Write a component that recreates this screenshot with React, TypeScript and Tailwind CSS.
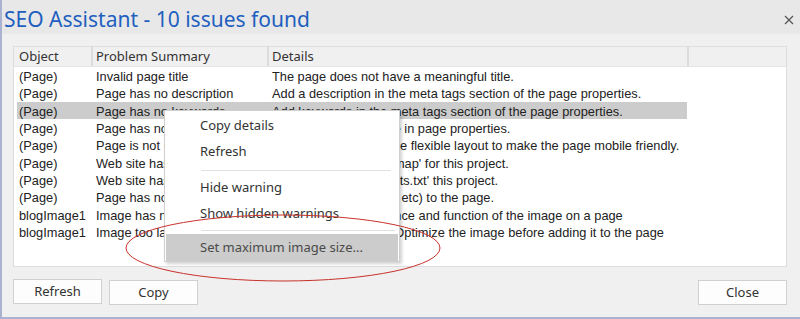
import React from 'react';

type Issue = { object: string; summary: string; details: string };

const issues: Issue[] = [
    { object: '(Page)', summary: 'Invalid page title', details: 'The page does not have a meaningful title.' },
    { object: '(Page)', summary: 'Page has no description', details: 'Add a description in the meta tags section of the page properties.' },
    { object: '(Page)', summary: 'Page has no keywords', details: 'Add keywords in the meta tags section of the page properties.' },
    { object: '(Page)', summary: 'Page has no language', details: 'Set the page language in page properties.' },
    { object: '(Page)', summary: 'Page is not responsive', details: 'Use a responsive or the flexible layout to make the page mobile friendly.' },
    { object: '(Page)', summary: 'Web site has no sitemap', details: "Create a new file 'sitemap' for this project." },
    { object: '(Page)', summary: 'Web site has no robots.txt', details: "Create a new file 'robots.txt' this project." },
    { object: '(Page)', summary: 'Page has no headings', details: 'Add headings (H1, H2 etc) to the page.' },
    { object: 'blogImage1', summary: 'Image has no alt text', details: 'Describe the appearance and function of the image on a page' },
    { object: 'blogImage1', summary: 'Image too large', details: 'The image is too big. Optimize the image before adding it to the page' },
];

const ui = { fontFamily: '"Noto Sans", "Open Sans", sans-serif' };
const list = { fontFamily: '"Liberation Sans", Arial, sans-serif' };

function Button({ label }: { label: string }) {
    return (
        <button
            className="w-[89px] h-[25px] bg-[#fdfdfd] border border-[#d0d0d0] text-[13px] text-[#333]"
            style={ui}
        >
            {label}
        </button>
    );
}

function MenuItem({ label, active }: { label: string; active?: boolean }) {
    return (
        <div
            className={
                active
                    ? 'h-[27px] flex items-center pl-[34px] bg-[#cccccc] text-[#4a4a4a] text-[13px]'
                    : 'h-[26px] flex items-center pl-[34px] text-[#333] text-[13px]'
            }
        >
            {label}
        </div>
    );
}

export default function App() {
    return (
        <div className="relative w-[800px] h-[319px] overflow-hidden bg-[#f0f0f0] border-l-2 border-b-2 border-[#a9b3d1] flex flex-col">
            {/* Title bar */}
            <div className="h-[34px] shrink-0 bg-[#e8e8e8] flex items-center justify-between pl-[2px] pr-[6px] pt-[5px]">
                <h1 className="text-[21px] text-[#1f5fbf] leading-none" style={ui}>
                    SEO Assistant - 10 issues found
                </h1>
                <svg width="10" height="10" viewBox="0 0 10 10" className="mt-[1px]">
                    <path d="M1 1 L9 9 M9 1 L1 9" stroke="#555" strokeWidth="1.2" />
                </svg>
            </div>

            {/* Body */}
            <div className="flex-1 flex flex-col pl-[11px]">
                <div className="mt-[12px] w-[774px] h-[221px] bg-white border border-[#dddddd] flex flex-col">
                    {/* Header */}
                    <div
                        className="h-[20px] shrink-0 bg-[#f0f0f0] border-b border-[#e4e4e4] flex text-[13px] text-[#333]"
                        style={ui}
                    >
                        <div className="w-[77px] pl-[5px] flex items-center">Object</div>
                        <div className="w-[176px] border-l-2 border-[#dcdcdc] pl-[3px] flex items-center">Problem Summary</div>
                        <div className="w-[420px] border-l-2 border-[#dcdcdc] pl-[3px] flex items-center">Details</div>
                        <div className="flex-1 border-l-2 border-[#dcdcdc]" />
                    </div>

                    {/* Rows */}
                    <div className="pl-[3px] text-[12.8px] text-[#222]" style={list}>
                        {issues.map((issue, i) => (
                            <div
                                key={i}
                                className={
                                    i === 2
                                        ? 'w-[670px] h-[17.33px] grid grid-cols-[77px_176px_1fr] items-center bg-[#cccccc] whitespace-nowrap'
                                        : 'w-[670px] h-[17.33px] grid grid-cols-[77px_176px_1fr] items-center whitespace-nowrap'
                                }
                            >
                                <div className="pl-[2px]">{issue.object}</div>
                                <div className="pl-[2px]">{issue.summary}</div>
                                <div className="pl-[2px]">{issue.details}</div>
                            </div>
                        ))}
                    </div>
                </div>

                {/* Buttons */}
                <div className="mt-[12px] flex w-[774px]">
                    <Button label="Refresh" />
                    <div className="ml-[7px]">
                        <Button label="Copy" />
                    </div>
                    <div className="ml-auto">
                        <Button label="Close" />
                    </div>
                </div>
            </div>

            {/* Context menu */}
            <div
                className="absolute left-[162px] top-[110px] w-[236px] h-[152px] bg-white border border-[#cfcfcf] px-[1px] pt-[2px] shadow-[2px_2px_3px_rgba(0,0,0,0.18)]"
                style={ui}
            >
                <MenuItem label="Copy details" />
                <MenuItem label="Refresh" />
                <div className="h-[10px] flex items-center pl-[35px] pr-[7px]">
                    <div className="h-px w-full bg-[#e0e0e0]" />
                </div>
                <MenuItem label="Hide warning" />
                <MenuItem label="Show hidden warnings" />
                <div className="h-[7px] flex items-center pl-[35px] pr-[3px]">
                    <div className="h-px w-full bg-[#e0e0e0]" />
                </div>
                <MenuItem label="Set maximum image size..." active />
            </div>

            {/* Red annotation ellipse */}
            <svg className="absolute left-0 top-0 pointer-events-none" width="800" height="319" viewBox="4 0 800 319">
                <ellipse cx="285" cy="248" rx="157" ry="33" fill="none" stroke="#c8322a" strokeWidth="1" />
            </svg>
        </div>
    );
}
